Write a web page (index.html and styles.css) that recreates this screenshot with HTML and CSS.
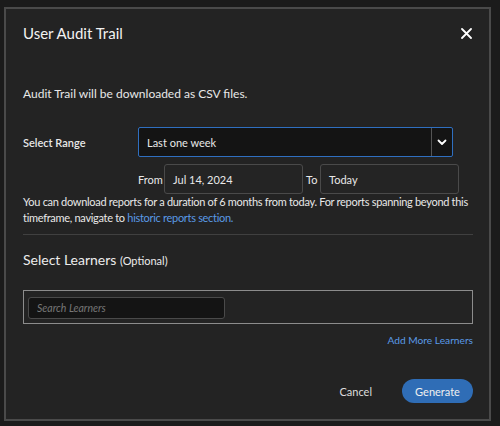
FILE: index.html
```html
<!DOCTYPE html>
<html lang="en">
<head>
  <meta charset="UTF-8" />
  <meta name="viewport" content="width=device-width, initial-scale=1.0">
  <title>User Audit Trail</title>
  <link rel="stylesheet" href="styles.css">
</head>
<body>
  <div class="dialog">
    <div class="dialog-header">
      <h1 class="dialog-title">User Audit Trail</h1>
      <button class="close-btn" aria-label="Close">
        <svg width="11" height="11" viewBox="0 0 11 11"><path d="M1 1 L10 10 M10 1 L1 10" stroke="#fff" stroke-width="1.8" stroke-linecap="round"/></svg>
      </button>
    </div>

    <p class="intro">Audit Trail will be downloaded as CSV files.</p>

    <div class="range-row">
      <label class="range-label">Select Range</label>
      <div class="select">
        <span class="select-value">Last one week</span>
        <span class="select-arrow">
          <svg width="10" height="7" viewBox="0 0 10 7"><path d="M1.5 1.5 L5 5 L8.5 1.5" fill="none" stroke="#fff" stroke-width="1.8" stroke-linecap="round" stroke-linejoin="round"/></svg>
        </span>
      </div>
    </div>

    <div class="dates-row">
      <span class="date-label from">From</span>
      <div class="date-input">Jul 14, 2024</div>
      <span class="date-label to">To</span>
      <div class="date-input">Today</div>
    </div>

    <p class="help">You can download reports for a duration of 6 months from today. For reports spanning beyond this timeframe, navigate to <a href="#" class="link">historic reports section.</a></p>

    <hr class="divider">

    <h2 class="learners-title">Select Learners <span class="optional">(Optional)</span></h2>

    <div class="learners-box">
      <input class="search" type="text" placeholder="Search Learners">
    </div>

    <div class="add-more"><a href="#" class="link">Add More Learners</a></div>

    <div class="actions">
      <button class="cancel-btn">Cancel</button>
      <button class="generate-btn">Generate</button>
    </div>
  </div>
</body>
</html>
```

FILE: styles.css
```css
body {
  margin: 0;
  background-color: #1b1b1b;
  font-family: Lato, 'Noto Sans', sans-serif;
  color: #e8e8e8;
}

.dialog {
  box-sizing: border-box;
  width: 487px;
  height: 414px;
  margin: 7px 0 0 4px;
  border: 2px solid #4a4a4a;
  background-color: #232323;
  padding: 0 16px 0 17px;
}

.dialog-header {
  display: flex;
  align-items: center;
  justify-content: space-between;
  height: 48px;
}

.dialog-title {
  margin: 0;
  font-size: 15px;
  line-height: 18px;
  font-weight: 400;
  color: #f2f2f2;
}

.close-btn {
  background: none;
  border: none;
  padding: 0;
  margin-right: 1px;
  margin-top: 1px;
  cursor: pointer;
  display: flex;
}

.intro {
  margin: 28px 0 0;
  font-size: 12px;
  line-height: 18px;
}

.range-row {
  display: flex;
  align-items: center;
  margin-top: 24px;
}

.range-label {
  width: 115px;
  font-size: 11px;
  font-weight: 600;
}

.select {
  box-sizing: border-box;
  display: flex;
  align-items: stretch;
  width: 315px;
  height: 30px;
  background-color: #141414;
  border: 1px solid #2f6fc0;
  border-radius: 2px;
}

.select-value {
  flex: 1;
  display: flex;
  align-items: center;
  padding-left: 8px;
  font-size: 11px;
}

.select-arrow {
  width: 20px;
  display: flex;
  align-items: center;
  justify-content: center;
  border-left: 1px solid #555;
}

.dates-row {
  display: flex;
  align-items: center;
  margin: 7px 0 0 115px;
}

.date-label {
  font-size: 11px;
}

.date-label.from {
  width: 26px;
}

.date-label.to {
  width: 11px;
  margin: 0 3px;
}

.date-input {
  box-sizing: border-box;
  width: 139px;
  height: 30px;
  display: flex;
  align-items: center;
  padding-left: 8px;
  font-size: 11px;
  border: 1px solid #4a4a4a;
  border-radius: 3px;
  background-color: #242424;
}

.help {
  margin: 0;
  font-size: 11px;
  line-height: 16px;
  letter-spacing: -0.3px;
}

.link {
  color: #5a9ae6;
  text-decoration: none;
}

.divider {
  border: none;
  border-top: 1px solid #404040;
  margin: 8px 0 0;
}

.learners-title {
  margin: 16px 0 0;
  font-size: 14px;
  line-height: 17px;
  font-weight: 400;
  color: #ececec;
}

.optional {
  font-size: 11px;
}

.learners-box {
  box-sizing: border-box;
  margin-top: 21px;
  height: 34px;
  border: 1px solid #8c8c8c;
  padding: 5px 4px;
}

.search {
  box-sizing: border-box;
  width: 197px;
  height: 22px;
  background-color: #141414;
  border: 1px solid #4a4a4a;
  border-radius: 3px;
  padding: 0 8px;
  font-family: inherit;
  font-size: 10.5px;
  font-style: italic;
  color: #ddd;
}

.search::placeholder {
  color: #777;
}

.add-more {
  text-align: right;
  margin-top: 9px;
  font-size: 10.2px;
  line-height: 14px;
}

.actions {
  display: flex;
  justify-content: flex-end;
  align-items: center;
  gap: 30px;
  margin-top: 32px;
}

.cancel-btn {
  background: none;
  border: none;
  color: #ddd;
  font-family: inherit;
  font-size: 11px;
  padding: 0;
  cursor: pointer;
}

.generate-btn {
  width: 71px;
  height: 24px;
  border: none;
  border-radius: 12px;
  background-color: #2f6db6;
  color: #f0f0f0;
  font-family: inherit;
  font-size: 11px;
  cursor: pointer;
}
```
